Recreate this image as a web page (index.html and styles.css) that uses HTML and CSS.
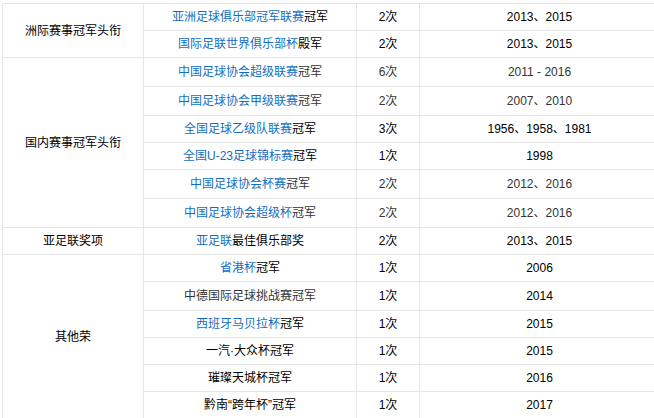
FILE: index.html
```html
<!DOCTYPE html>
<html lang="zh-CN">
<head>
<meta charset="utf-8">
<title>荣誉</title>
<link rel="stylesheet" href="styles.css">
</head>
<body>
<table class="honors">
  <colgroup>
    <col class="c1"><col class="c2"><col class="c3"><col class="c4">
  </colgroup>
  <tbody>
    <tr class="r27">
      <td rowspan="2">洲际赛事冠军头衔</td>
      <td><a>亚洲足球俱乐部冠军联赛</a>冠军</td>
      <td>2次</td>
      <td>2013、2015</td>
    </tr>
    <tr class="r27">
      <td><a>国际足联世界俱乐部杯</a>殿军</td>
      <td>2次</td>
      <td>2013、2015</td>
    </tr>
    <tr class="r29 soft">
      <td rowspan="6" class="plain">国内赛事冠军头衔</td>
      <td><a>中国足球协会超级联赛</a>冠军</td>
      <td>6次</td>
      <td>2011 - 2016</td>
    </tr>
    <tr class="r29 soft">
      <td><a>中国足球协会甲级联赛</a>冠军</td>
      <td>2次</td>
      <td>2007、2010</td>
    </tr>
    <tr class="r27">
      <td><a>全国足球乙级队联赛</a>冠军</td>
      <td>3次</td>
      <td>1956、1958、1981</td>
    </tr>
    <tr class="r27">
      <td><a>全国U-23足球锦标赛</a>冠军</td>
      <td>1次</td>
      <td>1998</td>
    </tr>
    <tr class="r29 soft">
      <td><a>中国足球协会杯赛</a>冠军</td>
      <td>2次</td>
      <td>2012、2016</td>
    </tr>
    <tr class="r29 soft">
      <td><a>中国足球协会超级杯</a>冠军</td>
      <td>2次</td>
      <td>2012、2016</td>
    </tr>
    <tr class="r27">
      <td>亚足联奖项</td>
      <td><a>亚足联</a>最佳俱乐部奖</td>
      <td>2次</td>
      <td>2013、2015</td>
    </tr>
    <tr class="r27">
      <td rowspan="6" class="plain">其他荣</td>
      <td><a>省港杯</a>冠军</td>
      <td>1次</td>
      <td>2006</td>
    </tr>
    <tr class="r29 soft">
      <td>中德国际足球挑战赛冠军</td>
      <td class="dark">1次</td>
      <td class="dark">2014</td>
    </tr>
    <tr class="r27">
      <td><a>西班牙马贝拉杯</a>冠军</td>
      <td>1次</td>
      <td>2015</td>
    </tr>
    <tr class="r27">
      <td>一汽·大众杯冠军</td>
      <td>1次</td>
      <td>2015</td>
    </tr>
    <tr class="r27">
      <td>璀璨天城杯冠军</td>
      <td>1次</td>
      <td>2016</td>
    </tr>
    <tr class="r27">
      <td>黔南“跨年杯”冠军</td>
      <td>1次</td>
      <td>2017</td>
    </tr>
  </tbody>
</table>
</body>
</html>
```

FILE: styles.css
```css
html, body {
  margin: 0;
  padding: 0;
  background: #fff;
}

body {
  padding: 3px 0 0 2px;
  font-family: "Liberation Sans", "Noto Sans CJK SC", sans-serif;
  font-size: 12px;
  color: #000;
  overflow: hidden;
}

.honors {
  border-collapse: collapse;
  table-layout: fixed;
  width: 657px;
}

.c1 { width: 141px; }
.c2 { width: 213px; }
.c3 { width: 63px; }
.c4 { width: 240px; }

.honors td {
  border: 1px solid #e6e6e6;
  padding: 0;
  text-align: center;
  vertical-align: middle;
  line-height: 16px;
  white-space: nowrap;
}

.r27 { height: 27px; }
.r29 { height: 29px; }

.soft td { color: #333; }
.soft td.plain { color: #000; }
.soft td.dark { color: #000; }

.honors a {
  color: #136ec2;
  text-decoration: none;
}
```
